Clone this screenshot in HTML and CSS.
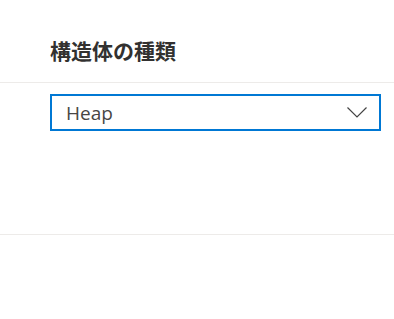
FILE: index.html
```html
<!DOCTYPE html>
<html lang="ja">
<head>
    <meta charset="UTF-8">
    <meta name="viewport" content="width=device-width, initial-scale=1.0">
    <title>構造体の種類</title>
    <link rel="stylesheet" href="styles.css">
</head>
<body>

<div class="panel">
    <!-- Header -->
    <div class="panel-header">
        <h2>構造体の種類</h2>
    </div>

    <!-- Dropdown -->
    <div class="panel-body">
        <div class="dropdown">
            <span class="dropdown-value">Heap</span>
            <svg class="dropdown-chevron" width="20" height="11" viewBox="0 0 20 11">
                <polyline points="0.5,0.5 10,10 19.5,0.5" fill="none" stroke="#444" stroke-width="1.2"/>
            </svg>
        </div>
    </div>
</div>

</body>
</html>
```

FILE: styles.css
```css
/* Basic styling */
body { margin: 0; font-family: "Open Sans", "Noto Sans CJK JP", sans-serif; background-color: #FFFFFF; color: #323130; }

/* Header */
.panel-header {
    height: 83px;
    box-sizing: border-box;
    padding: 36px 50px 0;
    border-bottom: 1px solid #edebe9;
}
.panel-header h2 {
    margin: 0;
    font-family: "Noto Sans CJK JP", sans-serif;
    font-size: 21px;
    font-weight: 700;
    line-height: 28px;
    color: #323130;
}

/* Body */
.panel-body {
    height: 152px;
    padding: 11px 0 0 50px;
    box-sizing: border-box;
    border-bottom: 1px solid #edebe9;
}

/* Dropdown */
.dropdown {
    width: 331px;
    height: 37px;
    box-sizing: border-box;
    border: 2px solid #0078d4;
    display: flex;
    align-items: center;
    justify-content: space-between;
    padding: 0 12px 0 14px;
}
.dropdown-value { font-size: 19px; color: #484644; margin-top: 1px; }
.dropdown-chevron { display: block; }
```
